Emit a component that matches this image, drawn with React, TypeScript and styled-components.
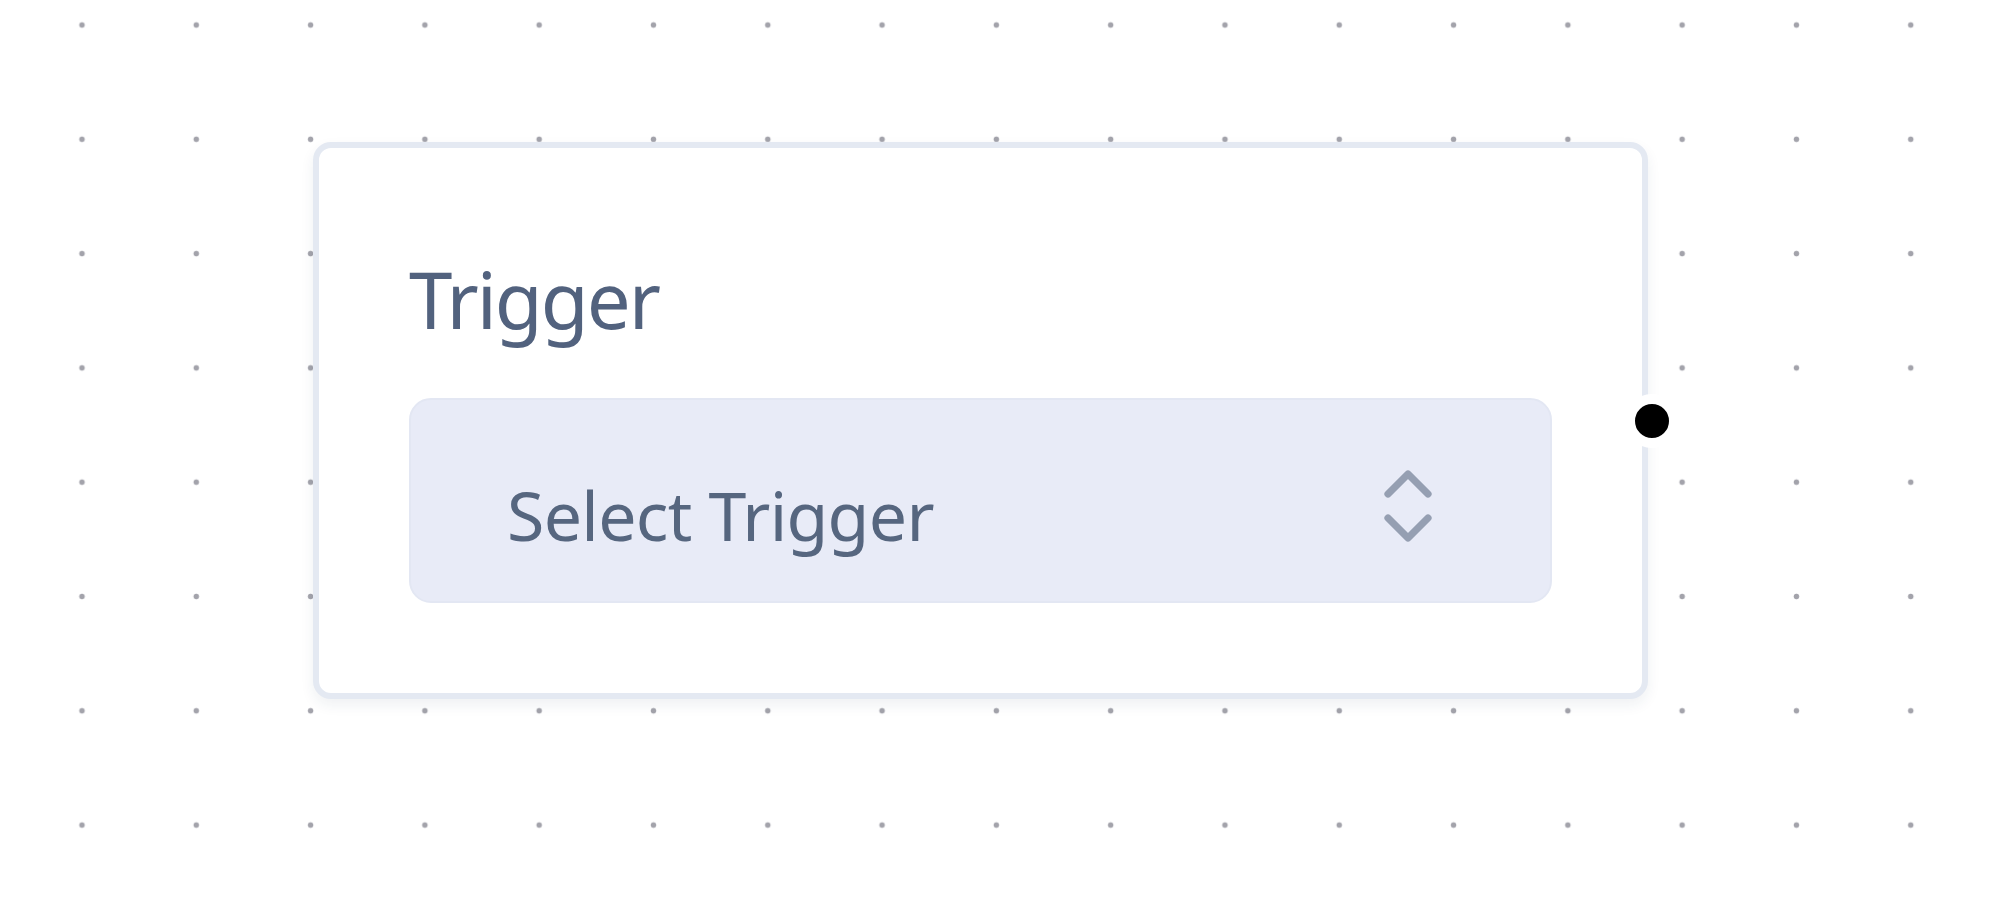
import React from 'react';
import styled, { createGlobalStyle } from 'styled-components';

const Global = createGlobalStyle`
	html, body, #root {
		margin: 0;
		padding: 0;
		width: 100%;
		height: 100%;
	}
	body {
		font-family: 'Noto Sans', 'Open Sans', sans-serif;
		background: #ffffff;
		overflow: hidden;
	}
`;

const Canvas = styled.div`
	position: relative;
	width: 100%;
	height: 100%;
	background-color: #ffffff;
	background-image: radial-gradient(circle, #a3a3ab 2.4px, transparent 3.2px);
	background-size: 114.3px 114.3px;
	background-position: 24.85px -32.15px;
`;

const Node = styled.div<{ $x: number; $y: number; $w: number }>`
	position: absolute;
	left: ${(p) => p.$x}px;
	top: ${(p) => p.$y}px;
	width: ${(p) => p.$w}px;
	box-sizing: border-box;
	padding: 90px;
	background: #ffffff;
	border: 6px solid #e4e9f2;
	border-radius: 18px;
	box-shadow: 0 6px 14px rgba(30, 50, 90, 0.07);
	display: flex;
	flex-direction: column;
	gap: 46px;
`;

const Label = styled.div`
	font-size: 78px;
	line-height: 106px;
	padding-top: 8px;
	letter-spacing: -2px;
	color: #52627e;
`;

const SelectBox = styled.button`
	all: unset;
	box-sizing: border-box;
	height: 205px;
	padding: 0 94px 0 96px;
	display: flex;
	align-items: center;
	justify-content: space-between;
	background: #e8ebf7;
	border: 2px solid #e3e7f3;
	border-radius: 22px;
	cursor: pointer;
`;

const SelectText = styled.span`
	font-family: 'Noto Sans', 'Open Sans', sans-serif;
	font-size: 68px;
	line-height: 92px;
	padding-top: 28px;
	letter-spacing: -0.7px;
	color: #56667f;
`;

const SelectIcon = styled.svg`
	width: 96px;
	height: 96px;
	margin-top: 11px;
	color: #959fb2;
	flex-shrink: 0;
`;

const Handle = styled.div`
	position: absolute;
	right: -37px;
	top: 50%;
	transform: translateY(-50%);
	width: 34px;
	height: 34px;
	border-radius: 50%;
	background: #000000;
	border: 10px solid #ffffff;
`;

export default function App() {
	return (
		<>
			<Global />
			<Canvas>
				<Node $x={313} $y={142} $w={1335}>
					<Label>Trigger</Label>
					<SelectBox>
						<SelectText>Select Trigger</SelectText>
						<SelectIcon viewBox="0 0 24 24" fill="none" stroke="currentColor" strokeWidth={1.8} strokeLinecap="round" strokeLinejoin="round">
							<path d="m7 15 5 5 5-5" />
							<path d="m7 9 5-5 5 5" />
						</SelectIcon>
					</SelectBox>
					<Handle />
				</Node>
			</Canvas>
		</>
	);
}
